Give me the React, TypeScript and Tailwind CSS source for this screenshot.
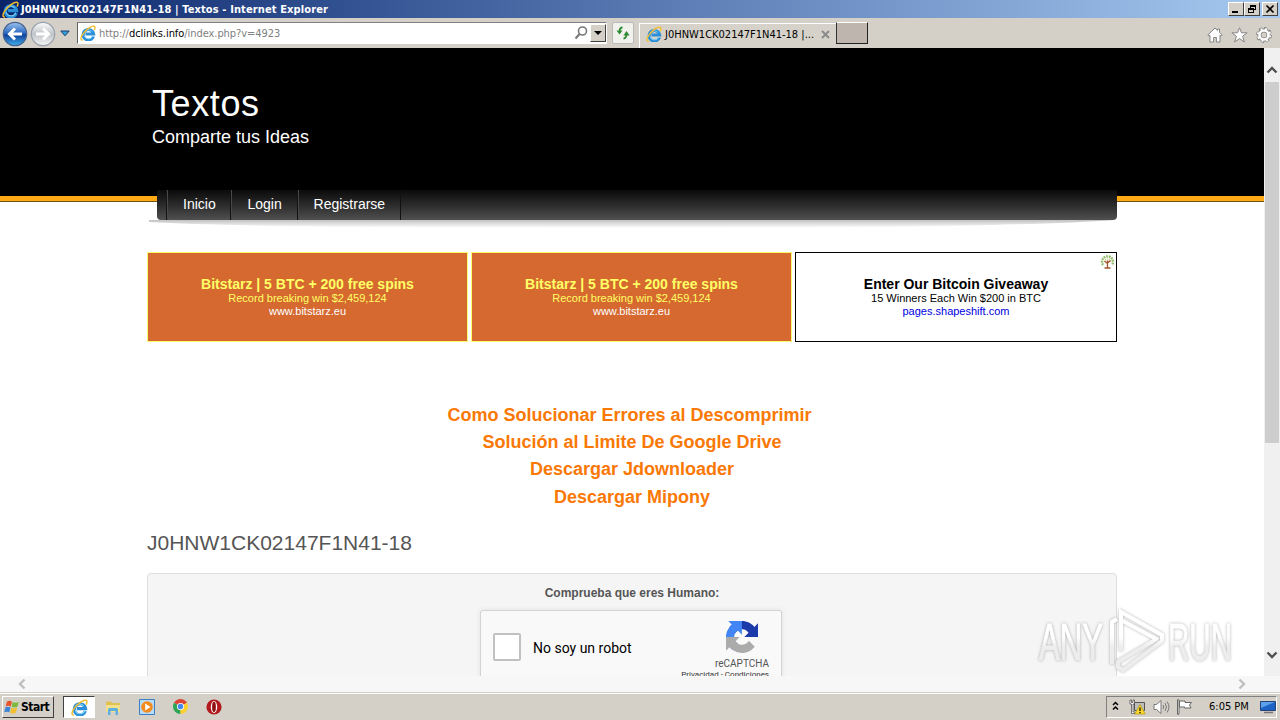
import type { ReactNode } from "react";

const IeLogo = ({ size }: { size: number }) => {
  return (
    <svg width={size} height={size} viewBox="0 0 16 16" fill="none">
      <path
        d="M13.500 11.400A5.300 5.300 0 1 1 13.700 9.100H5.500"
        stroke="#2a8fd8"
        strokeWidth="3"
      />
      <path
        d="M12.900 11A4.700 4.700 0 0 1 4 10.400M4 7.500A4.700 4.700 0 0 1 12 6.600"
        stroke="#7fd0f7"
        strokeWidth="1"
      />
      <path
        d="M2.800 15C.3 15.600.2 12.600 3 8.800 6.200 4.400 11.600.6 14 1.200c1.500.4 1.200 2.200.2 4"
        stroke="#f2bd2c"
        strokeWidth="1.400"
      />
    </svg>
  );
};

const NavCircle = ({ active }: { active?: boolean }) => {
  return (
    <svg width="26" height="26" viewBox="0 0 26 26">
      <defs>
        <linearGradient id="back-fill" x1="0" y1="0" x2="0" y2="1">
          <stop offset="0" stopColor="#9fc4ee" />
          <stop offset="0.45" stopColor="#2f6cc4" />
          <stop offset="0.55" stopColor="#11429c" />
          <stop offset="1" stopColor="#3fb0ee" />
        </linearGradient>
        <linearGradient id="forward-fill" x1="0" y1="0" x2="0" y2="1">
          <stop offset="0" stopColor="#ffffff" />
          <stop offset="0.5" stopColor="#bfc3c8" />
          <stop offset="1" stopColor="#f5f5f5" />
        </linearGradient>
      </defs>
      <circle
        cx="13"
        cy="13"
        r="11.700"
        fill={active ? "url(#back-fill)" : "url(#forward-fill)"}
        stroke={active ? "#45608c" : "#98a0ab"}
        strokeWidth="1.2"
      />
      <path
        d={
          active
            ? "M20 13H8M13 7.500 7.500 13l5.500 5.500"
            : "M6 13H18M13 7.500l5.500 5.500-5.500 5.500"
        }
        fill="none"
        stroke="#fff"
        strokeWidth="3"
      />
    </svg>
  );
};

const WindowButton = ({ children }: { children: ReactNode }) => {
  return (
    <div className="h-[14px] w-4 border border-t-white border-l-white border-r-[#404040] border-b-[#404040] bg-[#d4d0c8]">
      <svg
        width="14"
        height="12"
        viewBox="0 0 14 12"
        fill="none"
        stroke="#000"
        shapeRendering="crispEdges"
      >
        {children}
      </svg>
    </div>
  );
};

const TitleBar = () => {
  return (
    <div className="flex h-[18px] items-center bg-linear-to-r from-[#0a246a] via-[#5878b2] to-[#a6caf0] pl-[2px] pr-[2px]">
      <IeLogo size={17} />
      <p className="ml-[2px] flex-1 pt-px whitespace-nowrap text-[11px] leading-[17px] font-bold tracking-[0.12px] text-white">
        J0HNW1CK02147F1N41-18 | Textos - Internet Explorer
      </p>
      <WindowButton>
        <path d="M3 9h6" strokeWidth="2" />
      </WindowButton>
      <WindowButton>
        <path d="M5 2h6M5 3h6M5.500 2v3M10.500 2v5M8 6.500h3M3 5h6M3 6h6M3.500 5v5M8.500 5v5M3 9.500h6" />
      </WindowButton>
      <div className="w-[2px]" />
      <WindowButton>
        <path
          d="m3.500 2.500 7 7M10.500 2.500l-7 7"
          strokeWidth="1.700"
          shapeRendering="auto"
        />
      </WindowButton>
    </div>
  );
};

const Toolbar = () => {
  return (
    <div className="flex h-[30px] bg-[#d4d0c8] text-[11px]">
      <div className="flex w-[77px] items-start pt-[3px] pl-[2px]">
        <NavCircle active />
        <div className="ml-[2px]">
          <NavCircle />
        </div>
        <svg width="10" height="7" viewBox="0 0 10 7" className="mt-[9px] ml-1">
          <path d="M.8 1h8.400L5 5.800z" fill="#2fa4dc" stroke="#1d3a70" />
        </svg>
      </div>
      <div className="mt-1 flex h-[22px] w-[530px] items-center border border-t-[#808080] border-l-[#606060] border-r-white border-b-white bg-white pl-[2px]">
        <IeLogo size={16} />
        <p className="ml-[3px] flex-1 pt-[2px] tracking-[-0.06px] whitespace-nowrap text-[#808080]">
          http://<span className="text-black">dclinks.info</span>
          /index.php?v=4923
        </p>
        <svg width="15" height="16" viewBox="0 0 15 16" fill="none" stroke="#777">
          <circle cx="8.500" cy="6" r="4" strokeWidth="1.600" />
          <path d="m5.500 9-4 4.500" strokeWidth="2" />
        </svg>
        <div className="ml-[1px] flex h-[18px] w-4 items-center justify-center border border-t-white border-l-white border-r-[#404040] border-b-[#404040] bg-[#d4d0c8]">
          <svg width="8" height="4" viewBox="0 0 8 4">
            <path d="M0 0h8L4 4z" />
          </svg>
        </div>
      </div>
      <div className="mt-1 ml-[5px] flex size-[22px] items-center justify-center rounded-[2px] border border-[#b9b9b9] bg-[#f1f1ee]">
        <svg
          width="16"
          height="14"
          viewBox="0 0 16 14"
          fill="none"
          stroke="#2e8b35"
          strokeWidth="1.800"
        >
          <path d="M7.500 1.500C5.500 1.500 4.500 3 4.500 6" />
          <path d="M1.500 4.500h6L4.500 8.500z" fill="#2e8b35" stroke="none" />
          <path d="M8.500 12.500c2 0 3-1.500 3-4.500" />
          <path d="M8.400 9.500h6.200l-3.100-4.500z" fill="#2e8b35" stroke="none" />
        </svg>
      </div>
      <div className="mt-[5px] ml-[5px] flex h-[25px] w-[197px] items-start border-t border-l border-white bg-[#d6d2ca] pt-[2px] pl-[6px]">
        <IeLogo size={16} />
        <p className="ml-[3px] w-[156px] pt-px whitespace-nowrap text-black">
          J0HNW1CK02147F1N41-18 |...
        </p>
        <svg
          width="9"
          height="9"
          viewBox="0 0 9 9"
          className="mt-1"
          stroke="#8b8b8b"
          strokeWidth="2"
        >
          <path d="m1 1 7 7M8 1 1 8" />
        </svg>
      </div>
      <div className="mt-[4px] h-[22px] w-8 border border-t-white border-l-[#303030] border-r-[#202020] border-b-[#202020] bg-[#bdb5ae]" />
      <div className="mt-[9px] ml-auto flex h-4 gap-2 pr-2">
        <svg
          width="16"
          height="16"
          viewBox="0 0 16 16"
          fill="#fff"
          stroke="#858585"
        >
          <path d="M8 1 .8 8l1.200 1.200 1-.9V15h3.600v-4.500h2.800V15H13V8.300l1 .9L15.200 8 12.500 5.400V2h-2v1.400z" />
        </svg>
        <svg
          width="17"
          height="16"
          viewBox="0 0 17 16"
          fill="#fff"
          stroke="#858585"
        >
          <path d="m8.500.8 2 5h5.600l-4.500 3.500 1.800 5.700-4.900-3.400L3.600 15l1.800-5.700L.9 5.800h5.600z" />
        </svg>
        <svg
          width="16"
          height="16"
          viewBox="0 0 16 16"
          fill="none"
        >
          <circle
            cx="8"
            cy="8"
            r="6.600"
            stroke="#858585"
            strokeWidth="2.600"
            strokeDasharray="3 2.180"
          />
          <circle cx="8" cy="8" r="4.600" stroke="#858585" strokeWidth="4.200" />
          <circle
            cx="8"
            cy="8"
            r="6.100"
            stroke="#fff"
            strokeWidth="2"
            strokeDasharray="1.800 2.990"
            strokeDashoffset="-0.5"
          />
          <circle cx="8" cy="8" r="4.500" stroke="#fff" strokeWidth="2.600" />
        </svg>
      </div>
    </div>
  );
};

const TreeIcon = () => {
  return (
    <svg
      width="15"
      height="15"
      viewBox="0 0 15 15"
      className="absolute top-[1px] right-[1px]"
      fill="none"
    >
      <path
        d="M3 11A5.500 5.500 0 1 1 12 11"
        stroke="#93bd6c"
        strokeWidth="2.400"
        strokeDasharray="1.800 .8"
      />
      <path
        d="M4.500 8A3 3 0 1 1 10.500 8"
        stroke="#cdd394"
        strokeWidth="1.600"
        strokeDasharray="1.200 .8"
      />
      <path
        d="M7.500 14V6.500M7.500 9.500 4.500 7M7.500 9 10.500 6.500M4.500 14h6"
        stroke="#a0582c"
        strokeWidth="1.300"
      />
    </svg>
  );
};

const BitstarzAd = () => {
  return (
    <div className="flex h-[90px] w-[321px] flex-col items-center justify-center border border-[#fbfb6e] bg-[#d5692f] pb-px text-[11px] leading-[13px] text-[#ffff66]">
      <p className="text-sm leading-4 font-bold">
        Bitstarz | 5 BTC + 200 free spins
      </p>
      <p>Record breaking win $2,459,124</p>
      <p className="text-white">www.bitstarz.eu</p>
    </div>
  );
};

const NavItem = ({ label }: { label: string }) => {
  return (
    <li className="border-r border-l border-r-[#111] border-l-[#484848] pr-[14.8px] pl-[15px] leading-[28px]">
      {label}
    </li>
  );
};

const Recaptcha = () => {
  return (
    <div className="mt-2 ml-[332px] flex h-[76px] w-[302px] rounded-[3px] border border-[#d3d3d3] bg-[#f9f9f9] font-[Roboto,sans-serif] text-black shadow-[0_0_4px_1px_rgba(0,0,0,0.06)]">
      <div className="mt-[22px] ml-3 size-7 rounded-[2px] border-2 border-[#c1c1c1] bg-white" />
      <p className="mt-[28px] ml-3 flex-1 text-sm leading-[18px]">
        No soy un robot
      </p>
      <div className="mt-[10px] mr-3 flex w-[90px] flex-col items-end text-[#555]">
        <svg width="32" height="32" viewBox="0 0 64 64" className="mr-[11px]">
          <path
            d="M64 31.955l-.033-1.370V4.687l-7.160 7.160C50.948 4.674 42.033.093 32.050.093c-10.400 0-19.622 4.960-25.458 12.640l11.736 11.860a15.550 15.550 0 0 1 4.754-5.334c2.050-1.600 4.952-2.906 8.968-2.906.485 0 .860.057 1.135.163 4.976.393 9.288 3.140 11.828 7.124l-8.307 8.307L64 31.953"
            fill="#1c3aa9"
          />
          <path
            d="M31.862.094l-1.370.033H4.594l7.160 7.160C4.580 13.147 0 22.060 0 32.046c0 10.400 4.960 19.622 12.640 25.458L24.500 45.768a15.550 15.550 0 0 1-5.334-4.754c-1.600-2.050-2.906-4.952-2.906-8.968 0-.485.057-.860.163-1.135.393-4.976 3.140-9.288 7.124-11.828l8.307 8.307L31.860.095"
            fill="#4285f4"
          />
          <path
            d="M.093 32.047l.033 1.370v25.898l7.160-7.160c5.860 7.173 14.774 11.754 24.760 11.754 10.400 0 19.622-4.960 25.458-12.640L45.768 39.410a15.550 15.550 0 0 1-4.754 5.334c-2.050 1.600-4.952 2.906-8.968 2.906-.485 0-.860-.057-1.135-.163-4.976-.393-9.288-3.140-11.828-7.124l8.307-8.307-27.297.040"
            fill="#ababab"
          />
        </svg>
        <p className="mt-[5px] text-[10px] leading-3">reCAPTCHA</p>
        <p className="text-[8px] leading-[10px] whitespace-nowrap text-[#333]">
          Privacidad - Condiciones
        </p>
      </div>
    </div>
  );
};

const Page = () => {
  return (
    <main className="h-[628px] w-[1264px] overflow-hidden bg-white font-['Liberation_Sans',Arial,sans-serif]">
      <header className="h-[154px] border-b border-[#6b5413] bg-black">
        <div className="h-[148px] pt-[35px] pl-[152px] text-white">
          <h1 className="text-4xl leading-[42px] tracking-[0.6px]">Textos</h1>
          <p className="mt-[2px] text-lg leading-5">Comparte tus Ideas</p>
        </div>
        <div className="h-[5px] bg-[#ffa914]" />
      </header>
      <div className="mx-auto w-[970px]">
        <ul className="relative -mt-3 ml-[10px] flex h-[30px] w-[960px] rounded-b-[4px] bg-linear-to-b from-[#0b0b0b] to-[#505050] pl-[9px] text-sm text-white">
          <li className="border-r border-r-[#151515]" />
          <NavItem label="Inicio" />
          <NavItem label="Login" />
          <NavItem label="Registrarse" />
        </ul>
        <svg width="970" height="8" viewBox="0 0 970 8" className="block">
          <defs>
            <linearGradient id="nav-shadow" x1="0" y1="0" x2="0" y2="1">
              <stop offset="0" stopColor="#c2c2c2" />
              <stop offset="1" stopColor="#ffffff" />
            </linearGradient>
          </defs>
          <path d="M2 0H968Q860 8 485 8T2 2z" fill="url(#nav-shadow)" />
        </svg>
        <div className="mt-6 flex gap-[3px]">
          <BitstarzAd />
          <BitstarzAd />
          <div className="relative flex h-[90px] w-[322px] flex-col items-center justify-center border border-black pb-px text-[11px] leading-[13px] text-black">
            <TreeIcon />
            <p className="text-sm leading-4 font-bold">
              Enter Our Bitcoin Giveaway
            </p>
            <p>15 Winners Each Win $200 in BTC</p>
            <p className="text-[#0000e0]">pages.shapeshift.com</p>
          </div>
        </div>
        <div className="mt-[60px] text-center text-lg leading-[27px] font-bold text-[#fa7805]">
          <p className="pr-[5px]">Como Solucionar Errores al Descomprimir</p>
          <p>Solución al Limite De Google Drive</p>
          <p>Descargar Jdownloader</p>
          <p className="mt-px">Descargar Mipony</p>
        </div>
        <h2 className="mt-5 text-[21px] leading-6 text-[#555]">
          J0HNW1CK02147F1N41-18
        </h2>
        <div className="mt-[18px] h-[200px] rounded-[4px] border border-[#ddd] bg-[#f5f5f5] pt-[10px]">
          <p className="text-center text-xs leading-[18px] font-bold text-[#555]">
            Comprueba que eres Humano:
          </p>
          <Recaptcha />
        </div>
      </div>
    </main>
  );
};

const Chevron = ({ d, color }: { d: string; color: string }) => {
  return (
    <svg
      width="12"
      height="12"
      viewBox="0 0 12 12"
      fill="none"
      stroke={color}
      strokeWidth="2.400"
    >
      <path d={d} />
    </svg>
  );
};

const VerticalScrollbar = () => {
  return (
    <div className="flex h-[628px] w-4 flex-col items-center bg-[#f0f0f0] pt-4">
      <Chevron d="M1.500 8.500 6 4l4.500 4.500" color="#505050" />
      <div className="mt-[6px] h-[361px] w-[14px] bg-[#cdcdcd]" />
      <div className="mt-[206px]">
        <Chevron d="M1.500 3.500 6 8l4.500-4.500" color="#505050" />
      </div>
    </div>
  );
};

const Watermark = () => {
  return (
    <svg
      width="220"
      height="76"
      viewBox="0 0 220 76"
      className="pointer-events-none absolute top-[603px] left-[1030px] [filter:drop-shadow(0_0_1.5px_rgba(0,0,0,0.3))]"
      fill="url(#mark-fade)"
      fontFamily="'Liberation Sans Narrow', 'Liberation Sans', sans-serif"
      fontSize="52"
    >
      <defs>
        <linearGradient
          id="mark-fade"
          gradientUnits="userSpaceOnUse"
          x1="0"
          y1="34"
          x2="0"
          y2="44"
        >
          <stop offset="0" stopColor="#ffffff" />
          <stop offset="1" stopColor="#ededed" />
        </linearGradient>
      </defs>
      <g stroke="url(#mark-fade)" strokeWidth="1">
        <text x="9" y="57" textLength="64" lengthAdjust="spacingAndGlyphs">
          ANY
        </text>
        <text x="138" y="57" textLength="64" lengthAdjust="spacingAndGlyphs">
          RUN
        </text>
      </g>
      <g fill="none" stroke="url(#mark-fade)" strokeWidth="4">
        <path d="M82 61V19l5-3" />
        <path d="M91 48V9l41 23v6L93 67l-5-3v-5l37-22" />
        <path d="M91 17l37 20" />
      </g>
    </svg>
  );
};

const Taskbar = () => {
  return (
    <footer className="flex h-7 border-t border-[#d4d0c8] bg-[#d4d0c8] text-[11px] text-black">
      <div className="flex h-[27px] w-full border-t border-white pt-[2px]">
        <div className="ml-[2px] flex h-[22px] w-[52px] items-center border border-t-white border-l-white border-r-[#404040] border-b-[#404040] pl-[1px] font-bold">
          <svg width="16" height="16" viewBox="0 0 16 16">
            <path d="M3 2.500C5 1.500 6.500 1.800 8 2.600L6.800 7.500C5 6.600 3.500 6.600 1.600 7.500z" fill="#e8552c" />
            <path d="M8.800 3c2 1 4 1 6-.2l-1.400 5c-2 1-3.800 1-5.800 0z" fill="#7cba3e" />
            <path d="M1.400 8.300c2-.9 3.500-.8 5.200.1L5.300 13.300C3.600 12.400 2 12.500.2 13.300z" fill="#3f86d6" />
            <path d="M7.400 8.800c2 1 3.800.9 5.800 0l-1.400 4.900c-2 1-3.800 1-5.700 0z" fill="#f4bf2e" />
          </svg>
          <span className="pl-px text-xs tracking-[-0.5px]">Start</span>
        </div>
        <div className="ml-[9px] flex h-[22px] w-8 items-center justify-center border border-t-[#404040] border-l-[#404040] border-r-white border-b-white bg-white">
          <IeLogo size={17} />
        </div>
        <svg width="16" height="16" viewBox="0 0 16 16" className="mt-1 ml-[10px]">
          <path d="M1 3V1.500h5L7 3h8v9H1z" fill="#dfc053" />
          <path d="M1 5h14v7H1z" fill="#f3e08c" />
          <path d="M3 15V9.500Q3 8 4.500 8h7Q13 8 13 9.500V15h-2.500v-4h-5v4z" fill="#5fb0de" />
        </svg>
        <svg width="16" height="16" viewBox="0 0 16 16" className="mt-[3px] ml-[18px]">
          <path d="M.5.5h15v15H.5z" fill="#b9dbf5" stroke="#3a7fc4" />
          <circle cx="8" cy="8" r="5.800" fill="#f28a1c" />
          <path d="M6.200 4.500v7l5.300-3.500z" fill="#fff" />
        </svg>
        <svg width="15" height="15" viewBox="0 0 16 16" className="mt-[3px] ml-[18px]">
          <path d="M8 8 1.100 4A8 8 0 0 1 14.900 4z" fill="#de4435" />
          <path d="M8 8 8 16A8 8 0 0 1 1.100 4z" fill="#2fa455" />
          <path d="M8 8l6.900-4A8 8 0 0 1 8 16z" fill="#fbd02f" />
          <circle cx="8" cy="8" r="3.800" fill="#fff" />
          <circle cx="8" cy="8" r="2.900" fill="#4587ee" />
        </svg>
        <svg width="16" height="16" viewBox="0 0 16 16" className="mt-[3px] ml-[18px]">
          <circle cx="8" cy="8" r="7.600" fill="#b3191c" />
          <ellipse cx="8" cy="8" rx="3.200" ry="6" fill="#fff" />
          <ellipse cx="8" cy="8" rx="1.900" ry="5.200" fill="#8e1013" />
        </svg>
        <div className="mr-[3px] ml-auto flex h-[22px] w-[171px] items-center border border-t-[#808080] border-l-[#808080] border-r-white border-b-white pl-1">
          <svg
            width="9"
            height="12"
            viewBox="0 0 9 12"
            fill="none"
            stroke="#000"
            strokeWidth="1.500"
            className="mb-[2px]"
          >
            <path d="m2 5 2.500-2.500L7 5M2 9.500 4.500 7 7 9.500" />
          </svg>
          <svg width="17" height="16" viewBox="0 0 17 16" className="ml-[9px]">
            <path d="M5.500 3.500h10v8h-10z" fill="#bdbdbd" stroke="#555" />
            <path d="M1 1v4h1.500v9.500H6V13H4V5h1.500V1H4v2.500H2.500V1z" fill="#fff" stroke="#444" strokeWidth=".7" />
            <path d="M11 5.500 16.200 15H5.800z" fill="#f9d927" stroke="#b99a10" strokeWidth=".7" />
            <path d="M11 8.500v3.500M11 13v1.200" stroke="#000" strokeWidth="1.200" />
          </svg>
          <svg
            width="17"
            height="16"
            viewBox="0 0 17 16"
            className="ml-[7px]"
            fill="none"
            stroke="#777"
          >
            <path d="M1 5.500h2.500L8 1.500v13l-4.500-4H1z" fill="#fff" />
            <path d="M10 6q1.500 2 0 4M12 4q3 4 0 8M14 2.500q4 5.500 0 11" />
          </svg>
          <svg
            width="17"
            height="16"
            viewBox="0 0 17 16"
            className="ml-[6px]"
            fill="#fff"
            stroke="#666"
          >
            <path d="M1.500.8h1.500v14.500H1.500zM3.500 2h5.500v1.500h6.500l-2 2.500 1.500 3H8.500V8h-5z" />
          </svg>
          <span className="ml-[16px] w-[43px] whitespace-nowrap">6:05 PM</span>
          <svg width="16" height="14" viewBox="0 0 16 14" className="ml-[8px]">
            <path d="M.5 1.500h15v9H.5z" fill="#1c62c4" stroke="#21437c" />
            <path d="M1 2h14L1 8z" fill="#5aa0ea" />
            <path d="M4 12.500h9" stroke="#777" strokeWidth="1.500" />
          </svg>
        </div>
      </div>
    </footer>
  );
};

export default function App() {
  return (
    <div className="relative flex h-[720px] w-[1280px] flex-col overflow-hidden bg-white font-['DejaVu_Sans_Condensed','DejaVu_Sans',sans-serif]">
      <TitleBar />
      <Toolbar />
      <div className="flex">
        <Page />
        <VerticalScrollbar />
      </div>
      <div className="flex h-4 items-center justify-between bg-[#f7f7f7] pr-8 pl-4">
        <Chevron d="M8.500 1.500 4 6l4.500 4.500" color="#bfbfbf" />
        <Chevron d="M3.500 1.500 8 6l-4.500 4.500" color="#bfbfbf" />
      </div>
      <Taskbar />
      <Watermark />
    </div>
  );
}
